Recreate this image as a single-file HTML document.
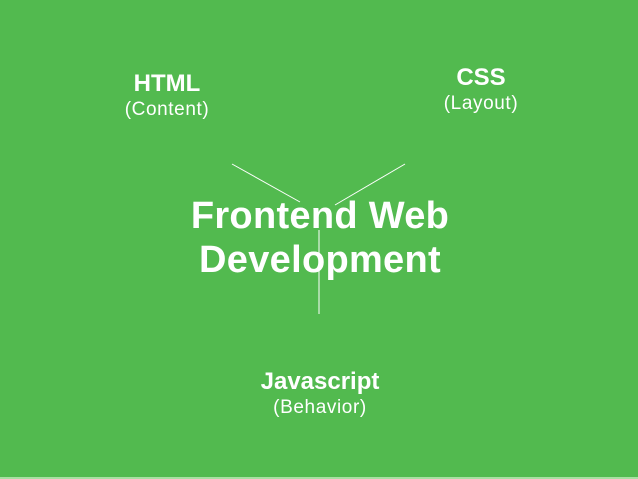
<!DOCTYPE html>
<html><head><style>
body{margin:0;width:638px;height:479px;background:#52BA4F;overflow:hidden;position:relative;font-family:"Liberation Sans",sans-serif;color:#fff}
.t{position:absolute;text-align:center;white-space:nowrap;transform:translateX(-50%)}
.b{font-weight:bold;font-size:24px;line-height:28px}
.r{font-size:19px;line-height:22px;letter-spacing:0.6px}
.big{font-weight:bold;font-size:38px;line-height:44px;letter-spacing:0.3px}
</style></head><body>
<svg width="638" height="479" style="position:absolute;left:0;top:0">
<g stroke="#fff" stroke-width="1">
<line x1="232" y1="164" x2="300" y2="202"/>
<line x1="405" y1="164" x2="335" y2="205"/>
<line x1="319" y1="230" x2="319" y2="314"/>
</g>
<rect x="0" y="477" width="638" height="2" fill="#a8e0a2"/>
</svg>
<div class="t b" style="left:167px;top:70px">HTML</div>
<div class="t r" style="left:167px;top:99px">(Content)</div>
<div class="t b" style="left:481px;top:64px">CSS</div>
<div class="t r" style="left:481px;top:93px">(Layout)</div>
<div class="t big" style="left:320px;top:194px">Frontend Web<br>Development</div>
<div class="t b" style="left:320px;top:368px">Javascript</div>
<div class="t r" style="left:320px;top:397px">(Behavior)</div>
</body></html>
